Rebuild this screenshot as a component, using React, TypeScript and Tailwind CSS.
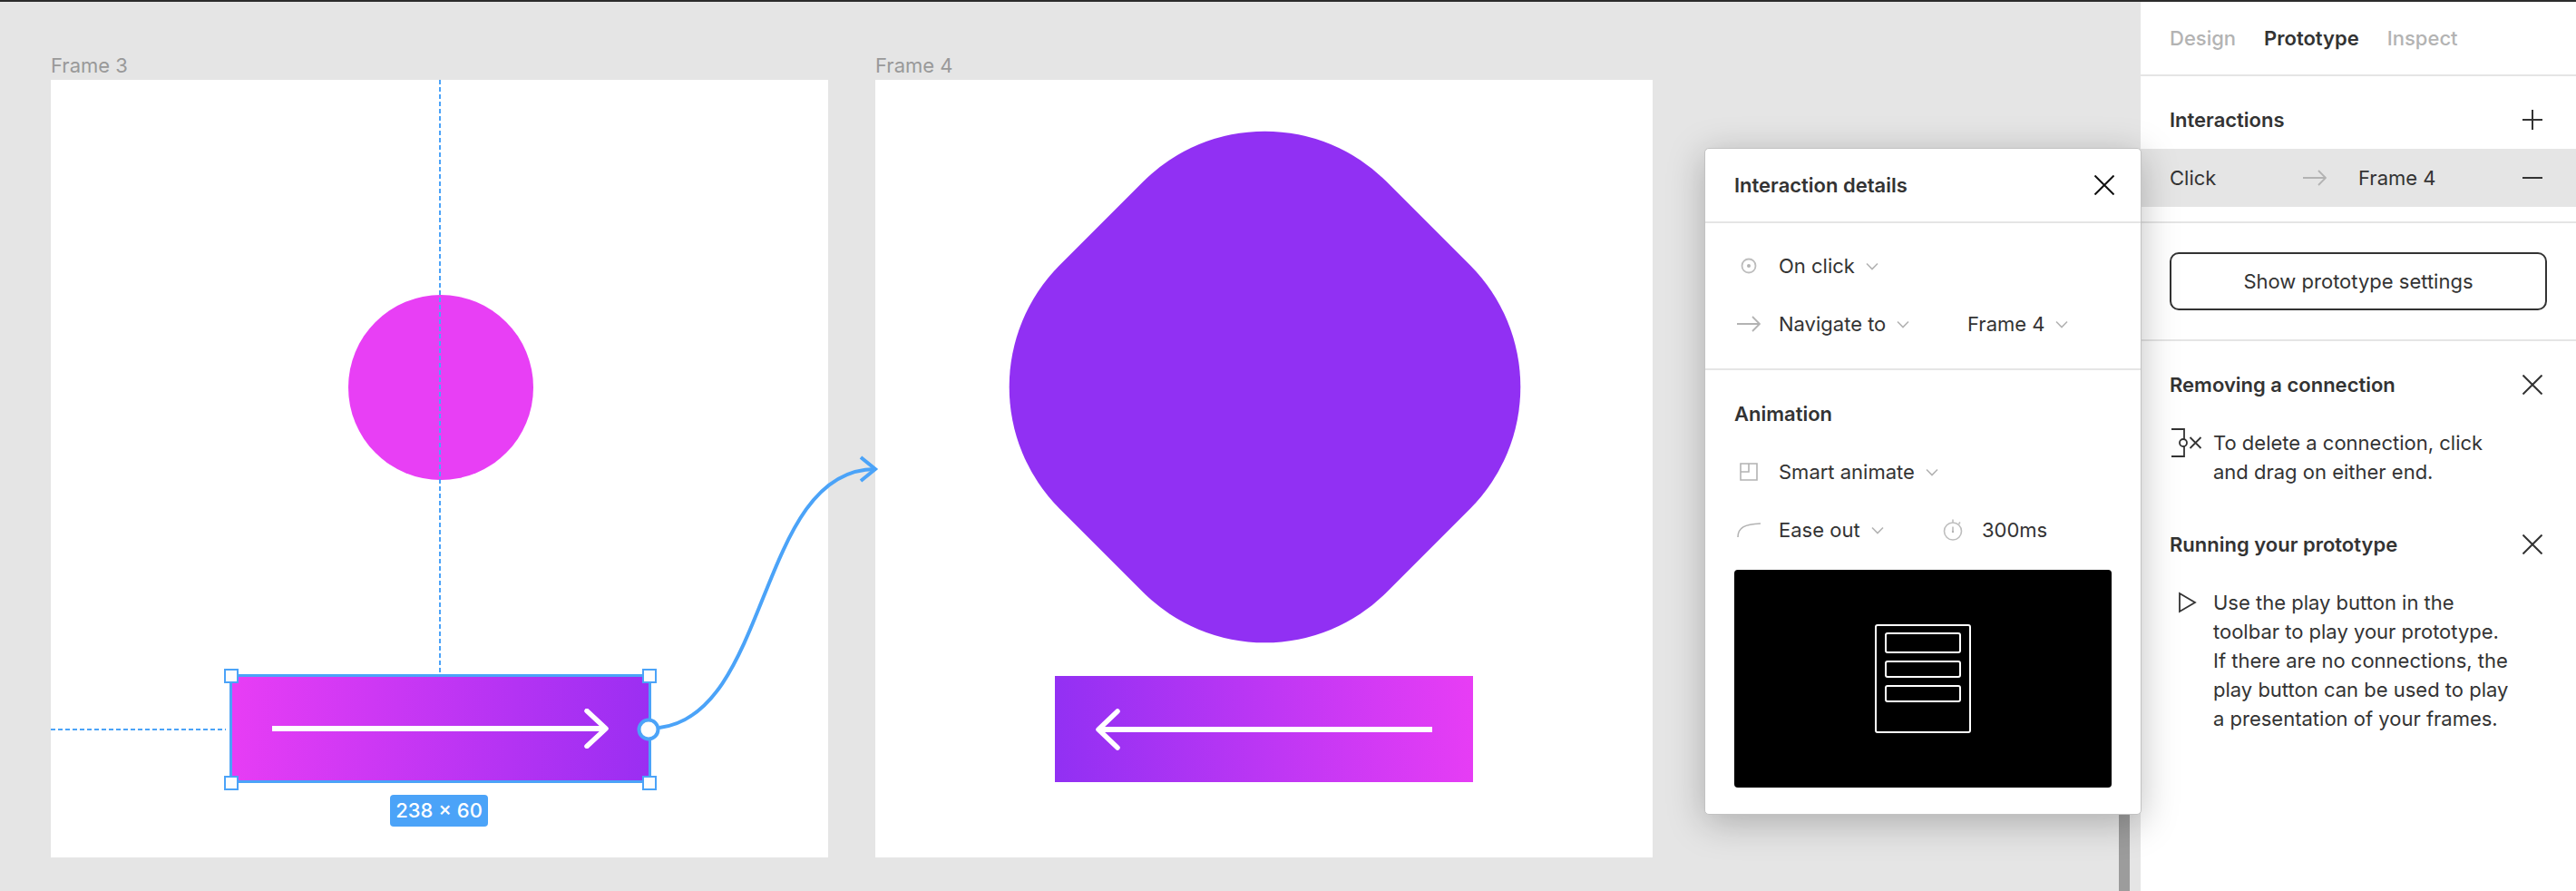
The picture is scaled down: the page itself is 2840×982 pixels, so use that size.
import type { ReactNode } from "react";

// Figma prototype panel mock: canvas with two frames, details popup, right sidebar

function Chevron() {
  return (
    <svg width="14" height="9" viewBox="0 0 14 9" fill="none" className="ml-[12px] shrink-0">
      <path d="M1 1.5L7 7.5L13 1.5" stroke="#b3b3b3" strokeWidth="1.6" />
    </svg>
  );
}

function CloseIcon({ color = "#333333" }: { color?: string }) {
  return (
    <svg width="22" height="22" viewBox="0 0 22 22" fill="none">
      <path d="M0.5 0.5L21.5 21.5M21.5 0.5L0.5 21.5" stroke={color} strokeWidth="2" />
    </svg>
  );
}

function ThinArrow() {
  return (
    <svg width="26" height="18" viewBox="0 0 26 18" fill="none">
      <path d="M0 9H25M17 1L25 9L17 17" stroke="#b3b3b3" strokeWidth="1.8" />
    </svg>
  );
}

function PopupRow({ icon, children }: { icon: ReactNode; children: ReactNode }) {
  return (
    <div className="flex h-[44px] items-center">
      <div className="mr-[18px] flex w-[31px] shrink-0 justify-center">{icon}</div>
      {children}
    </div>
  );
}

function Select({ label }: { label: string }) {
  return (
    <div className="flex items-center">
      <span>{label}</span>
      <Chevron />
    </div>
  );
}

function InteractionPopup() {
  return (
    <div className="absolute left-[1879px] top-[163px] z-10 h-[735px] w-[482px] rounded-[5px] border border-[#c2c2c2] bg-white text-[22px] text-[#333333] shadow-[0_8px_40px_rgba(0,0,0,0.25)]">
      <div className="flex h-[82px] items-center justify-between border-b-2 border-[#e5e5e5] pl-[32px] pr-[29px]">
        <span className="font-semibold">Interaction details</span>
        <CloseIcon color="#111111" />
      </div>

      <div className="flex h-[162px] flex-col gap-[20px] border-b-2 border-[#e5e5e5] pl-[32px] pt-[25px]">
        <PopupRow
          icon={
            <svg width="18" height="18" viewBox="0 0 18 18" fill="none">
              <circle cx="9" cy="9" r="7.5" stroke="#bdbdbd" strokeWidth="1.8" />
              <circle cx="9" cy="9" r="2" fill="#b3b3b3" />
            </svg>
          }
        >
          <Select label="On click" />
        </PopupRow>
        <PopupRow icon={<ThinArrow />}>
          <div className="w-[208px]">
            <Select label="Navigate to" />
          </div>
          <Select label="Frame 4" />
        </PopupRow>
      </div>

      <div className="px-[32px]">
        <div className="mt-[32px] flex h-[32px] items-center font-semibold">Animation</div>
        <div className="mt-[26px] flex flex-col gap-[20px]">
          <PopupRow
            icon={
              <svg width="20" height="20" viewBox="0 0 20 20" fill="none">
                <path d="M1 1H19V19H1ZM1 10H10V1" stroke="#b3b3b3" strokeWidth="1.6" />
              </svg>
            }
          >
            <Select label="Smart animate" />
          </PopupRow>
          <PopupRow
            icon={
              <svg width="26" height="16" viewBox="0 0 26 16" fill="none">
                <path d="M1 16C1 6 8 1.5 26 1" stroke="#b3b3b3" strokeWidth="1.6" />
              </svg>
            }
          >
            <div className="w-[181px]">
              <Select label="Ease out" />
            </div>
            <svg width="22" height="24" viewBox="0 0 22 24" fill="none" className="mr-[21px] shrink-0">
              <circle cx="11" cy="13.5" r="9.5" stroke="#bdbdbd" strokeWidth="1.6" />
              <path d="M11 0.5V4M19 3.5L17.5 5.5M11 8.5V14" stroke="#bdbdbd" strokeWidth="1.6" />
              <circle cx="11" cy="14" r="1.2" fill="#b3b3b3" />
            </svg>
            <span>300ms</span>
          </PopupRow>
        </div>
        <div className="mt-[22px] flex h-[240px] items-center justify-center rounded-[4px] bg-black">
          <div className="flex h-[120px] w-[106px] flex-col items-center gap-[8px] rounded-[3px] border-2 border-white pt-[7px]">
            <div className="h-[23px] w-[84px] rounded-[3px] border-2 border-white" />
            <div className="h-[19px] w-[84px] rounded-[3px] border-2 border-white" />
            <div className="h-[19px] w-[84px] rounded-[3px] border-2 border-white" />
          </div>
        </div>
      </div>
    </div>
  );
}

function Handle({ className }: { className: string }) {
  return (
    <div className={`absolute h-[16px] w-[16px] border-2 border-[#4ba3f8] bg-[#fdfdfd] ${className}`} />
  );
}

function FrameThree() {
  return (
    <div className="relative h-[857px] w-[857px] bg-white">
      <div className="absolute left-[328px] top-[237px] h-[204px] w-[204px] rounded-full bg-[#e83ff5]" />

      {/* button with selection box */}
      <div className="absolute left-[197px] top-[655px] flex h-[120px] w-[465px] items-center justify-center border-[3px] border-[#4ba3f8] bg-[linear-gradient(95deg,#e83df5,#9a2ef2)]">
        <svg width="372" height="44" viewBox="0 0 372 44" fill="none">
          <path d="M0 22H366" stroke="white" strokeWidth="6" />
          <path d="M347 2.5L368 22L347 41.5" stroke="white" strokeWidth="5.5" strokeLinecap="round" strokeLinejoin="round" />
        </svg>
        <Handle className="-left-[9px] -top-[9px]" />
        <Handle className="-right-[9px] -top-[9px]" />
        <Handle className="-bottom-[11px] -left-[9px]" />
        <Handle className="-bottom-[11px] -right-[9px]" />
      </div>

      <div className="absolute left-[374px] top-[788px] flex h-[35px] w-[108px] items-center justify-center rounded-[4px] bg-[#4ba3f8] text-[22px] font-medium text-white">
        238 × 60
      </div>

      {/* smart guides */}
      <svg width="857" height="857" viewBox="0 0 857 857" fill="none" className="pointer-events-none absolute left-0 top-0">
        <path d="M429 0V654" stroke="#4ba3f8" strokeWidth="2" strokeDasharray="5 3" />
        <path d="M0 716H193" stroke="#4ba3f8" strokeWidth="2" strokeDasharray="5 3" />
      </svg>
    </div>
  );
}

function FrameFour() {
  return (
    <div className="relative h-[857px] w-[857px] bg-white">
      <svg width="565" height="565" viewBox="0 0 565 565" className="absolute left-[147px] top-[56px]">
        <path
          d="M148.5 56A190 190 0 0 1 416.5 56L509 148.5A190 190 0 0 1 509 416.5L416.5 509A190 190 0 0 1 148.5 509L56 416.5A190 190 0 0 1 56 148.5Z"
          fill="#9130f3"
        />
      </svg>
      <div className="absolute left-[198px] top-[657px] flex h-[117px] w-[461px] items-center bg-[linear-gradient(85deg,#9130f3,#e83df5)]">
        <svg width="372" height="46" viewBox="0 0 372 46" fill="none" className="ml-[45px]">
          <path d="M6 23H371" stroke="white" strokeWidth="6" />
          <path d="M24 3L3 23L24 43" stroke="white" strokeWidth="5.5" strokeLinecap="round" strokeLinejoin="round" />
        </svg>
      </div>
    </div>
  );
}

function Canvas() {
  return (
    <div className="relative h-full w-[2360px] shrink-0 bg-[#e5e5e5]">
      <div className="flex gap-[52px] pl-[56px] pt-[57px]">
        <div>
          <div className="mb-[3px] h-[26px] text-[22px] leading-[26px] text-[#999999]">Frame 3</div>
          <FrameThree />
        </div>
        <div>
          <div className="mb-[3px] h-[26px] text-[22px] leading-[26px] text-[#999999]">Frame 4</div>
          <FrameFour />
        </div>
      </div>

      {/* prototype connection */}
      <svg width="2360" height="980" viewBox="0 0 2360 980" fill="none" className="pointer-events-none absolute left-0 top-0">
        <path d="M727 800C850 785 835 515 965 515" stroke="#4ba3f8" strokeWidth="4" />
        <path d="M949 502L965 515L949 528" stroke="#4ba3f8" strokeWidth="4" />
        <circle cx="715" cy="802" r="10.5" fill="#fdfdfd" stroke="#4ba3f8" strokeWidth="4" />
      </svg>

      {/* canvas scrollbar, mostly under the popup */}
      <div className="absolute bottom-0 left-[2336px] h-[300px] w-[12px] bg-[#9c9c9c]" />
    </div>
  );
}

function HelpBlock({ title, icon, children }: { title: string; icon: ReactNode; children: ReactNode }) {
  return (
    <div>
      <div className="flex h-[32px] items-center justify-between font-semibold">
        <span>{title}</span>
        <span className="mr-[5px]">
          <CloseIcon />
        </span>
      </div>
      <div className="mt-[32px] flex">
        <div className="relative h-[32px] w-[48px] shrink-0">{icon}</div>
        <p className="w-[332px] leading-[32px]">{children}</p>
      </div>
    </div>
  );
}

function Sidebar() {
  return (
    <div className="h-full w-[480px] shrink-0 bg-white text-[22px] text-[#333333]">
      <div className="flex h-[82px] items-center gap-[31px] border-b-2 border-[#e5e5e5] pl-[32px] font-semibold">
        <span className="font-medium text-[#b3b3b3]">Design</span>
        <span>Prototype</span>
        <span className="font-medium text-[#b3b3b3]">Inspect</span>
      </div>

      <div className="border-b-2 border-[#e5e5e5] pb-[16px]">
        <div className="flex h-[80px] items-center justify-between pl-[32px] pr-[37px] pt-[16px] font-semibold">
          <span>Interactions</span>
          <svg width="22" height="22" viewBox="0 0 22 22" fill="none">
            <path d="M11 0V22M0 11H22" stroke="#333333" strokeWidth="2" />
          </svg>
        </div>
        <div className="flex h-[64px] items-center bg-[#e5e5e5] pl-[32px] pr-[37px]">
          <span className="w-[147px]">Click</span>
          <ThinArrow />
          <span className="ml-[35px] flex-1">Frame 4</span>
          <svg width="22" height="2" viewBox="0 0 22 2">
            <path d="M0 1H22" stroke="#333333" strokeWidth="2" />
          </svg>
        </div>
      </div>

      <div className="border-b-2 border-[#e5e5e5] p-[32px]">
        <div className="flex h-[64px] w-[416px] items-center justify-center rounded-[10px] border-2 border-[#333333]">
          Show prototype settings
        </div>
      </div>

      <div className="flex flex-col gap-[48px] pl-[32px] pr-[32px] pt-[32px]">
        <HelpBlock
          title="Removing a connection"
          icon={
            <svg width="36" height="32" viewBox="0 0 36 32" fill="none" className="absolute left-[1px] top-0">
              <path d="M1 1H15V31H1" stroke="#333333" strokeWidth="1.8" />
              <circle cx="14" cy="16" r="4" fill="white" stroke="#333333" strokeWidth="1.8" />
              <path d="M21.5 10L33.5 22M33.5 10L21.5 22" stroke="#333333" strokeWidth="1.8" />
            </svg>
          }
        >
          To delete a connection, click and drag on either end.
        </HelpBlock>
        <HelpBlock
          title="Running your prototype"
          icon={
            <svg width="20" height="24" viewBox="0 0 20 24" fill="none" className="absolute left-[10px] top-[4px]">
              <path d="M1 2L18 12L1 22Z" stroke="#333333" strokeWidth="1.8" />
            </svg>
          }
        >
          Use the play button in the toolbar to play your prototype. If there are no connections, the play button can be used to play a presentation of your frames.
        </HelpBlock>
      </div>
    </div>
  );
}

export default function App() {
  return (
    <div className="relative flex h-[982px] w-[2840px] flex-col overflow-hidden font-['Inter',sans-serif]">
      <div className="h-[2px] shrink-0 bg-[#2c2c2c]" />
      <div className="flex min-h-0 flex-1">
        <Canvas />
        <Sidebar />
      </div>
      <InteractionPopup />
    </div>
  );
}
